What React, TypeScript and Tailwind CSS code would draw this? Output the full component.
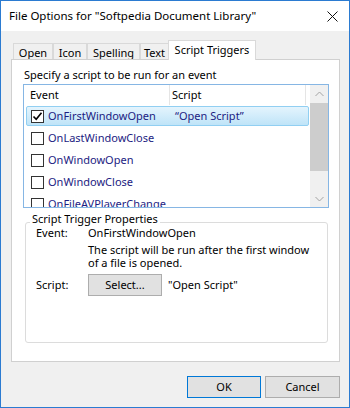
import React from "react"

const font = { fontFamily: '"Noto Sans", "Open Sans", sans-serif' }

const tabs = [
  { label: "Open", w: "w-[40px]" },
  { label: "Icon", w: "w-[34px]" },
  { label: "Spelling", w: "w-[53px]" },
  { label: "Text", w: "w-[29px]" },
]

const events = [
  { name: "OnFirstWindowOpen", script: "\u201cOpen Script\u201d", checked: true },
  { name: "OnLastWindowClose", script: "", checked: false },
  { name: "OnWindowOpen", script: "", checked: false },
  { name: "OnWindowClose", script: "", checked: false },
  { name: "OnFileAVPlayerChange", script: "", checked: false },
]

function CheckBox({ checked }: { checked: boolean }) {
  return (
    <div className="w-[13px] h-[13px] border border-[#333333] bg-white flex items-center justify-center shrink-0">
      {checked && (
        <svg width="11" height="11" viewBox="0 0 11 11">
          <path d="M1.5 5.5 L4.2 8.3 L9.5 1.8" fill="none" stroke="#000" strokeWidth="1.6" />
        </svg>
      )}
    </div>
  )
}

function Chevron({ up }: { up?: boolean }) {
  return (
    <div className="h-[17px] flex items-center justify-center">
      <svg width="9" height="6" viewBox="0 0 9 6">
        <path d={up ? "M0.5 5 L4.5 1 L8.5 5" : "M0.5 1 L4.5 5 L8.5 1"} fill="none" stroke="#a3a3a3" strokeWidth="1" />
      </svg>
    </div>
  )
}

function WinButton({ children, primary }: { children: React.ReactNode; primary?: boolean }) {
  return (
    <div
      className={`h-[22px] flex items-center justify-center bg-[#e1e1e1] border text-[11px] text-black ${
        primary ? "border-[#0078d7] w-[74px]" : "border-[#adadad] w-[75px]"
      }`}
    >
      {children}
    </div>
  )
}

export default function App() {
  return (
    <div style={font} className="w-[350px] h-[408px] border border-[#2b7bd1] bg-[#f0f0f0] flex flex-col text-[11px] text-black overflow-hidden">
      {/* Title bar */}
      <div className="h-[30px] bg-white flex items-center justify-between pl-[8px] pr-[11px] shrink-0">
        <span className="text-[11.5px]">File Options for "Softpedia Document Library"</span>
        <svg width="11" height="11" viewBox="0 0 11 11">
          <path d="M0.5 0.5 L10.5 10.5 M10.5 0.5 L0.5 10.5" stroke="#111" strokeWidth="1" />
        </svg>
      </div>

      <div className="pl-[10px] pr-[9px] pt-[9px] flex flex-col">
        {/* Tabs */}
        <div className="flex items-end h-[20px] pl-[2px]">
          {tabs.map((t) => (
            <div
              key={t.label}
              className={`${t.w} h-[17px] border-t border-l border-r border-[#d9d9d9] bg-[#f0f0f0] flex items-center justify-center leading-none`}
            >
              {t.label}
            </div>
          ))}
          <div className="relative z-10 -ml-px w-[88px] h-[20px] border-t border-l border-r border-[#d9d9d9] bg-white flex items-center justify-center leading-none pb-[2px]">
            Script Triggers
          </div>
        </div>

        {/* Panel */}
        <div className="-mt-px h-[303px] border border-[#d0d0d0] bg-white pt-[7px]">
          <div className="pl-[12px] leading-[16px]">Specify a script to be run for an event</div>

          {/* List */}
          <div className="ml-[11px] mt-[1px] w-[306px] h-[124px] border border-[#86b6e4] flex overflow-hidden">
            <div className="flex-1 flex flex-col overflow-hidden">
              <div className="h-[20px] flex shrink-0">
                <div className="w-[146px] border-r border-[#e5e5e5] pl-[6px] flex items-center">Event</div>
                <div className="w-[136px] border-r border-[#e5e5e5] pl-[2px] flex items-center">Script</div>
              </div>
              {events.map((e) => (
                <div key={e.name} className="h-[22px] shrink-0 flex items-center">
                  <div
                    className={`ml-[2px] mr-[1px] h-[20px] flex-1 flex items-center border rounded-[2px] ${
                      e.checked
                        ? "bg-gradient-to-b from-[#e4f4fd] to-[#bfe4f8] border-[#91cff2]"
                        : "border-transparent"
                    }`}
                  >
                    <div className="ml-[4px]">
                      <CheckBox checked={e.checked} />
                    </div>
                    <div className="ml-[4px] w-[127px] text-[#1c1c82] whitespace-nowrap">{e.name}</div>
                    <div className="text-[#1c1c82]">{e.script}</div>
                  </div>
                </div>
              ))}
            </div>
            {/* Scrollbar */}
            <div className="w-[18px] bg-[#f0f0f0] flex flex-col shrink-0">
              <Chevron up />
              <div className="mt-px h-[68px] bg-[#cdcdcd]" />
              <div className="flex-1" />
              <Chevron />
            </div>
          </div>

          {/* Group box */}
          <fieldset className="ml-[13px] mt-[4px] w-[303px] h-[131px] border border-[#dcdcdc] rounded-[3px]">
            <legend className="ml-[4px] px-[2px] leading-[14px] pb-[6px]">Script Trigger Properties</legend>
            <div className="-mt-[6px] pl-[10px]">
              <div className="flex leading-[14px]">
                <div className="w-[52px]">Event:</div>
                <div>OnFirstWindowOpen</div>
              </div>
              <div className="mt-[3px] ml-[52px] leading-[13px] w-[230px]">
                The script will be run after the first window of a file is opened.
              </div>
              <div className="mt-[5px] flex items-center">
                <div className="w-[52px]">Script:</div>
                <div className="w-[74px] h-[22px] bg-[#e1e1e1] border border-[#adadad] flex items-center justify-center">
                  Select...
                </div>
                <div className="ml-[6px]">"Open Script"</div>
              </div>
            </div>
          </fieldset>
        </div>

        {/* Buttons */}
        <div className="mt-[14px] flex justify-end gap-[4px]">
          <WinButton primary>OK</WinButton>
          <WinButton>Cancel</WinButton>
        </div>
      </div>
    </div>
  )
}
